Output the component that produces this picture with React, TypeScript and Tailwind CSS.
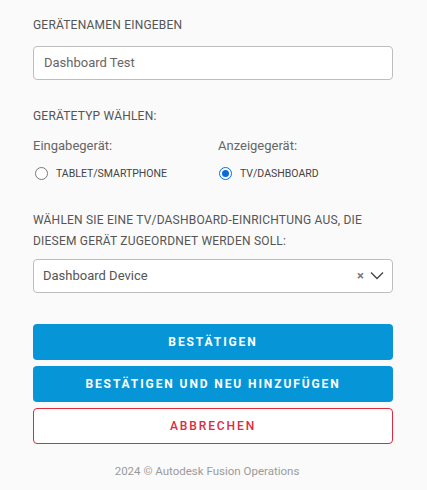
import React from "react";

export default function App() {
  const font = { fontFamily: "Roboto, 'Noto Sans', sans-serif" };
  return (
    <div className="w-[427px] h-[490px] bg-[#fafafa] text-[#3c3c3c]" style={font}>
      <div className="pl-[33px] pt-[17px] flex flex-col w-[393px]">
        <div className="text-[12px] leading-[16px] text-[#555] tracking-[0.2px]">GERÄTENAMEN EINGEBEN</div>
        <div className="mt-[13px] h-[34px] border border-[#bdbdbd] rounded-[4px] bg-white flex items-center px-[10px] text-[13px] text-[#666]">
          Dashboard Test
        </div>
        <div className="mt-[28px] text-[12px] leading-[16px] text-[#555] tracking-[0.2px]">GERÄTETYP WÄHLEN:</div>
        <div className="mt-[14px] grid grid-cols-[185px_1fr]">
          <div className="flex flex-col">
            <div className="text-[13px] leading-[16px] text-[#666]">Eingabegerät:</div>
            <label className="mt-[12px] flex items-center gap-[8px]">
              <span className="w-[13px] h-[13px] rounded-full border border-[#777] bg-white ml-[2px]" />
              <span className="text-[10.5px] text-[#444]">TABLET/SMARTPHONE</span>
            </label>
          </div>
          <div className="flex flex-col">
            <div className="text-[13px] leading-[16px] text-[#666]">Anzeigegerät:</div>
            <label className="mt-[12px] flex items-center gap-[8px]">
              <span className="w-[13px] h-[13px] rounded-full border-[1.5px] border-[#0a6cd6] bg-white ml-[1px] flex items-center justify-center">
                <span className="w-[7px] h-[7px] rounded-full bg-[#0a6cd6]" />
              </span>
              <span className="text-[10.5px] text-[#444]">TV/DASHBOARD</span>
            </label>
          </div>
        </div>
        <div className="mt-[28px] text-[12px] leading-[21px] text-[#555] tracking-[0.2px]">
          WÄHLEN SIE EINE TV/DASHBOARD-EINRICHTUNG AUS, DIE DIESEM GERÄT ZUGEORDNET WERDEN SOLL:
        </div>
        <div className="mt-[7px] h-[34px] border border-[#bdbdbd] rounded-[4px] bg-white flex items-center pl-[9px] pr-[8px] text-[13px] text-[#555]">
          <span className="flex-1">Dashboard Device</span>
          <span className="text-[#777] text-[13px] font-bold mr-[6px]">×</span>
          <svg width="14" height="9" viewBox="0 0 14 9" fill="none">
            <path d="M1 1.5 L7 7.5 L13 1.5" stroke="#444" strokeWidth="1.3" />
          </svg>
        </div>
        <div className="mt-[31px] flex flex-col gap-[6px]">
          <button className="h-[36px] rounded-[4px] bg-[#0696d7] text-white text-[12px] font-bold tracking-[1.9px]">BESTÄTIGEN</button>
          <button className="h-[36px] rounded-[4px] bg-[#0696d7] text-white text-[12px] font-bold tracking-[1.9px]">BESTÄTIGEN UND NEU HINZUFÜGEN</button>
          <button className="h-[36px] rounded-[4px] border border-[#dd2a3f] bg-white text-[#dd2a3f] text-[12px] font-medium tracking-[1.9px]">ABBRECHEN</button>
        </div>
        <div className="mt-[19px] pr-[12px] text-center text-[11.5px] text-[#9a9a9a]">2024 © Autodesk Fusion Operations</div>
      </div>
    </div>
  );
}
